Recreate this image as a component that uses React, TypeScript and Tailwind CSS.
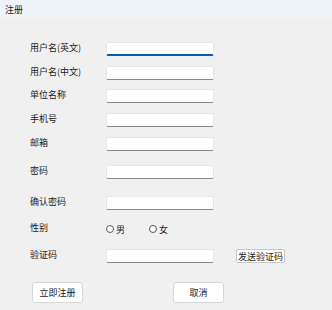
const fields = [
  { label: '用户名(英文)', mt: 'mt-[24px]', focused: true },
  { label: '用户名(中文)', mt: 'mt-[10px]' },
  { label: '单位名称', mt: 'mt-[9px]' },
  { label: '手机号', mt: 'mt-[10px]' },
  { label: '邮箱', mt: 'mt-[10px]' },
  { label: '密码', mt: 'mt-[14px]' },
  { label: '确认密码', mt: 'mt-[17px]' },
];

const TextBox = ({ focused }: { focused?: boolean }) => (
  <div
    className={
      focused
        ? 'h-[14px] w-[108px] rounded-[2px] border border-[#e6e6e6] border-b-2 border-b-[#005fb8] bg-white'
        : 'h-[14px] w-[108px] rounded-[2px] border border-[#e6e6e6] border-b-[#8a8a8a] bg-white'
    }
  />
);

const Radio = ({ label }: { label: string }) => (
  <div className="flex items-center gap-[2px]">
    <span className="h-[8px] w-[8px] rounded-full border border-[#555] bg-white" />
    <span>{label}</span>
  </div>
);

const App = () => {
  return (
    <div
      className="flex h-[310px] w-[332px] flex-col bg-[#f0f0f0] text-[9px] leading-none text-[#1a1a1a]"
      style={{ fontFamily: '"Noto Sans CJK SC", "Noto Sans", sans-serif' }}
    >
      <div className="flex h-[18px] items-center bg-[#eef2f9] pl-[5px]">注册</div>

      {fields.map((f) => (
        <div key={f.label} className={`flex h-[14px] items-center ${f.mt}`}>
          <span className="w-[106px] pb-[3px] pl-[30px]">{f.label}</span>
          <TextBox focused={f.focused} />
        </div>
      ))}

      <div className="mt-[12px] flex h-[14px] items-center">
        <span className="w-[106px] pb-[3px] pl-[30px]">性别</span>
        <div className="flex gap-[24px]">
          <Radio label="男" />
          <Radio label="女" />
        </div>
      </div>

      <div className="mt-[13px] flex h-[14px] items-center">
        <span className="w-[106px] pb-[3px] pl-[30px]">验证码</span>
        <TextBox />
        <button className="ml-[22px] h-[14px] w-[49px] rounded-[2px] border border-[#c8c8c8] bg-white leading-none">
          发送验证码
        </button>
      </div>

      <div className="mt-[19px] flex h-[21px] items-center">
        <button className="ml-[32px] h-[21px] w-[51px] rounded-[3px] border border-[#d6d6d6] bg-white">
          立即注册
        </button>
        <button className="ml-[90px] h-[21px] w-[51px] rounded-[3px] border border-[#d6d6d6] bg-white">
          取消
        </button>
      </div>
    </div>
  );
};

export default App;
